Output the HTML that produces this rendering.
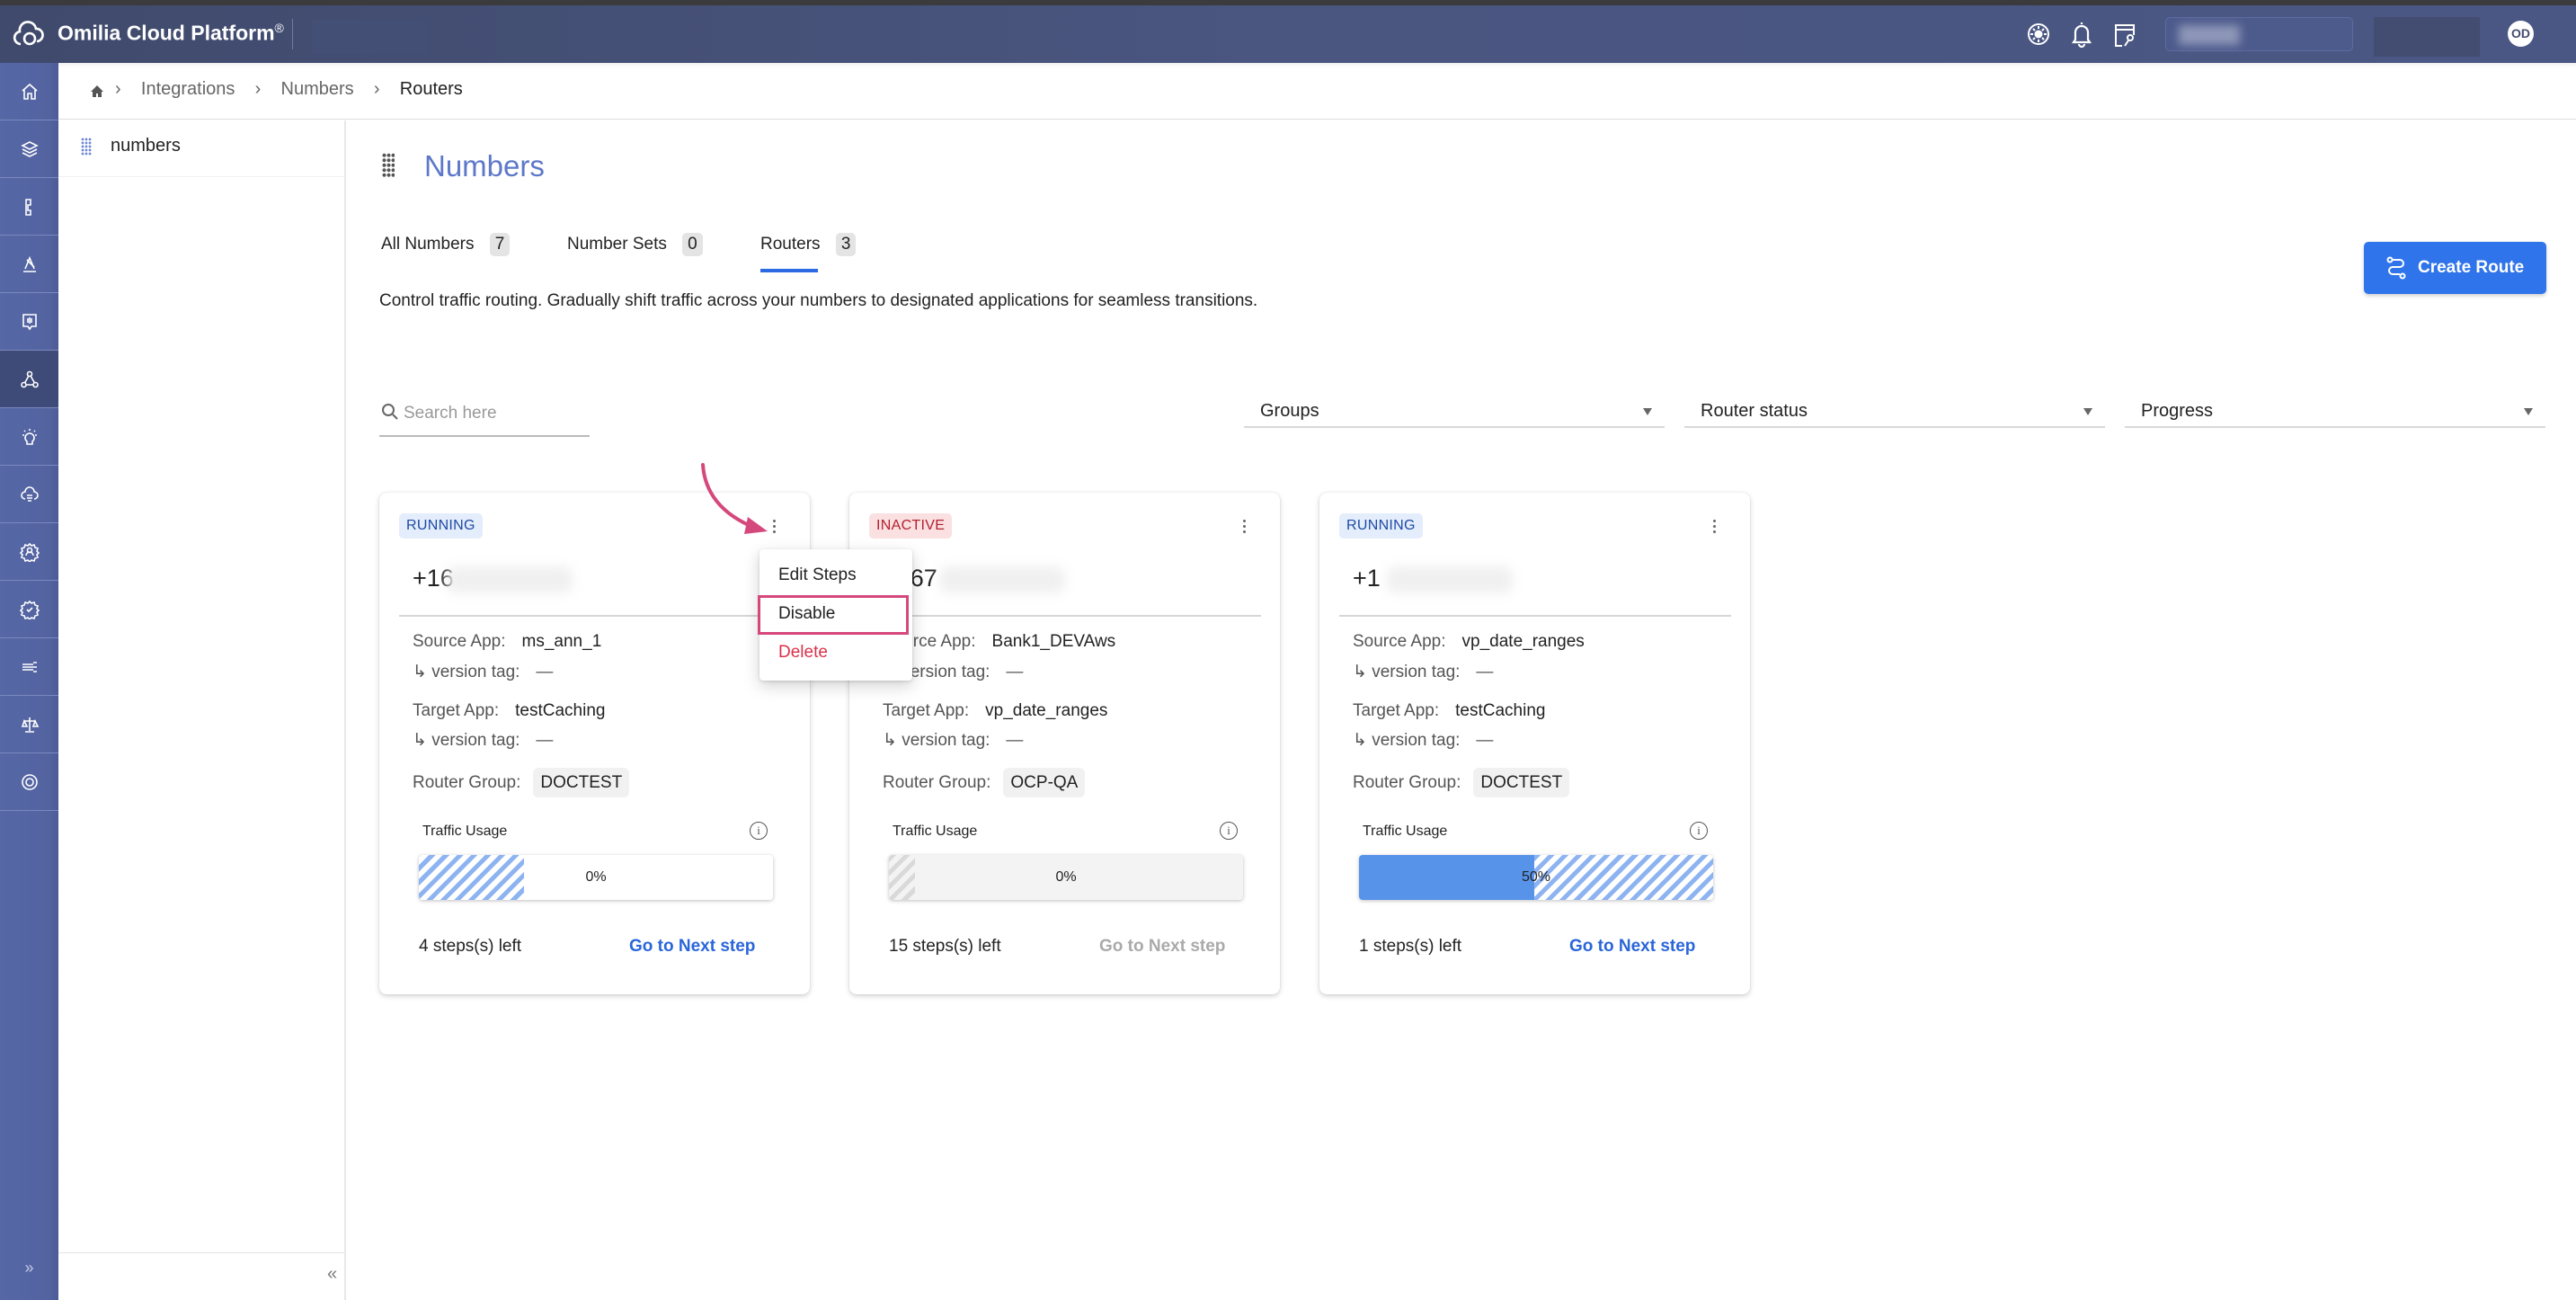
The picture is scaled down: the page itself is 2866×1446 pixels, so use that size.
<!DOCTYPE html>
<html><head><meta charset="utf-8"><style>
*{box-sizing:border-box;margin:0;padding:0}
body{width:2866px;height:1446px;position:relative;overflow:hidden;background:#fff;font-family:"Liberation Sans",sans-serif;color:#222}
.a{position:absolute}
.top{left:0;top:0;width:2866px;height:6px;background:#3b3b3d}
.hdr{left:0;top:6px;width:2866px;height:64px;background:linear-gradient(90deg,#404a6c,#4a5680 50%,#4a5784)}
.side{left:0;top:70px;width:65px;height:1376px;background:linear-gradient(90deg,#5667a6,#5363a0 85%,#4c5b95)}
.si{left:0;width:65px;height:64px;border-bottom:1px solid #7a88bd;display:flex;align-items:center;justify-content:center}
.si svg{width:22px;height:22px;stroke:#fff;fill:none;stroke-width:1.6}
.lbl{color:#555}
.card{width:479px;height:558px;background:#fff;border-radius:8px;box-shadow:0 2px 6px rgba(0,0,0,.18),0 0 1px rgba(0,0,0,.2)}
.card .a{white-space:nowrap}
.badge{left:22px;top:23px;height:28px;padding:0 8px;border-radius:5px;font-size:16px;line-height:28px;letter-spacing:.3px}
.run{background:#e4edfb;color:#1d4aa5}
.ina{background:#fbe0e2;color:#b3202e}
.keb{left:437px;top:30px;width:4px;height:15px;display:flex;flex-direction:column;justify-content:space-between;align-items:center}
.keb i{width:3px;height:3px;background:#666;border-radius:50%}
.ph{left:37px;top:80px;font-size:27px;color:#222}
.blur{top:82px;height:30px;width:140px;background:#f0f0f0;filter:blur(6px);border-radius:10px}
.div{left:22px;top:136px;width:436px;height:2px;background:#d6d6d6}
.row{left:37px;font-size:19px}
.row b{font-weight:normal;color:#222;margin-left:18px}
.chip{background:#f1f1f1;border-radius:6px;padding:6px 8px;color:#222;margin-left:14px}
.tu{left:48px;top:368px;font-size:16px;color:#222}
.info{left:412px;top:366px;width:20px;height:20px;border:1.5px solid #555;border-radius:50%;font-size:13px;text-align:center;line-height:17px;color:#555;font-family:"Liberation Serif",serif}
.bar{left:44px;top:403px;width:394px;height:50px;border-radius:4px;box-shadow:0 1px 4px rgba(0,0,0,.25);overflow:hidden;background:#fff}
.bar span{position:absolute;left:0;top:0;width:100%;text-align:center;line-height:50px;font-size:16px}
.stripe{background:repeating-linear-gradient(-45deg,#fff 0 6px,#8db3f1 6px 11px)}
.gstripe{background:repeating-linear-gradient(-45deg,#f3f3f3 0 6px,#d9d9d9 6px 11px)}
.steps{left:44px;top:494px;font-size:19px}
.nx{left:278px;top:494px;font-size:19px;font-weight:bold;color:#2a66d9}
.dd{height:31px;border-bottom:2px solid #d8d8d8;font-size:20px;color:#222}
.dd::after{content:"";position:absolute;right:14px;top:9px;border-left:5px solid transparent;border-right:5px solid transparent;border-top:8px solid #666}
</style></head><body>
<div class="a top"></div>
<div class="a hdr">
  <svg class="a" style="left:14px;top:17px" width="36" height="30" viewBox="0 0 36 30" fill="none" stroke="#fff" stroke-width="2.6"><path d="M9 26a7 7 0 01-1-13.9A9 9 0 0126 9a7 7 0 011 14"/><circle cx="19" cy="20" r="6"/></svg>
  <div class="a" style="left:64px;top:17px;color:#fff;font-size:23px;font-weight:bold;white-space:nowrap">Omilia Cloud Platform<sup style="font-size:14px;font-weight:normal">®</sup></div>
  <div class="a" style="left:325px;top:15px;width:1px;height:34px;background:#6d7ab0"></div>
  <div class="a" style="left:347px;top:16px;width:128px;height:38px;background:#444f75"></div>
  <svg class="a" style="left:2255px;top:19px" width="26" height="26" viewBox="0 0 26 26" fill="none" stroke="#fff" stroke-width="2"><circle cx="13" cy="13" r="11"/><circle cx="13" cy="13" r="3.5" fill="#fff"/><path d="M13 4v3M13 19v3M4 13h3M19 13h3M7 7l2 2M17 17l2 2M7 19l2-2M17 9l2-2"/></svg>
  <svg class="a" style="left:2303px;top:16px" width="26" height="32" viewBox="0 0 26 32" fill="none" stroke="#fff" stroke-width="2.2"><path d="M13 3v2M6 22V14a7 7 0 0114 0v8l2 3H4z"/><path d="M10 27a3 3 0 006 0"/></svg>
  <svg class="a" style="left:2352px;top:20px" width="26" height="28" viewBox="0 0 26 28" fill="none" stroke="#fff" stroke-width="2"><path d="M9 25H2V2h20v11M2 7h20"/><circle cx="18" cy="16" r="3"/><path d="M16 19l-4 6"/></svg>
  <div class="a" style="left:2409px;top:13px;width:209px;height:38px;background:#4d5a8c;border:1px solid #5d6ba2;border-radius:5px"></div>
  <div class="a" style="left:2424px;top:22px;width:68px;height:22px;background:#8e97b8;filter:blur(5px)"></div>
  <div class="a" style="left:2641px;top:13px;width:118px;height:44px;background:#434d72"></div>
  <div class="a" style="left:2790px;top:17px;width:29px;height:29px;background:#fff;border-radius:50%;color:#444c6e;font-size:14px;font-weight:bold;text-align:center;line-height:29px">OD</div>
</div>
<div class="a side">
  <div class="a si" style="top:0"><svg viewBox="0 0 22 22"><path d="M3 10L11 3l8 7M5 9v10h4v-6h4v6h4V9"/></svg></div>
  <div class="a si" style="top:64px"><svg viewBox="0 0 22 22"><path d="M11 3l8 4-8 4-8-4zM3 11l8 4 8-4M3 15l8 4 8-4"/></svg></div>
  <div class="a si" style="top:128px"><svg viewBox="0 0 22 22"><path d="M7 3h5v6H9v6h3v5H7z"/></svg></div>
  <div class="a si" style="top:192px"><svg viewBox="0 0 22 22"><path d="M4 19h14M6 16l5-12 5 12M8 6l8 8"/></svg></div>
  <div class="a si" style="top:256px"><svg viewBox="0 0 22 22"><path d="M4 3h14v13h-5l-2 3-2-3H4zM9 7v5M11 6v7M13 7v5"/></svg></div>
  <div class="a si" style="top:320px;background:#3e4a78"><svg viewBox="0 0 22 22"><circle cx="11" cy="5" r="2.5"/><circle cx="4.5" cy="17" r="2.5"/><circle cx="17.5" cy="17" r="2.5"/><path d="M10 7l-4.5 8M12 7l4.5 8M7 17h8"/></svg></div>
  <div class="a si" style="top:384px"><svg viewBox="0 0 22 22"><path d="M8 16a5 5 0 116 0v3H8zM11 2v2M3 9h2M17 9h2M5 4l1 1M17 4l-1 1"/></svg></div>
  <div class="a si" style="top:448px"><svg viewBox="0 0 22 22"><path d="M6 16a4 4 0 010-8 5 5 0 0110 0 4 4 0 010 8M8 12h6M8 15h6M9 18h4"/></svg></div>
  <div class="a si" style="top:512px"><svg viewBox="0 0 22 22"><path d="M11 2l2 2 3-1 1 3 3 1-1 3 2 2-2 2 1 3-3 1-1 3-3-1-2 2-2-2-3 1-1-3-3-1 1-3-2-2 2-2-1-3 3-1 1-3 3 1z"/><circle cx="11" cy="9" r="2.5"/><path d="M7 15a4 4 0 018 0"/></svg></div>
  <div class="a si" style="top:576px"><svg viewBox="0 0 22 22"><path d="M11 2l2 2 3-1 1 3 3 1-1 3 2 2-2 2 1 3-3 1-1 3-3-1-2 2-2-2-3 1-1-3-3-1 1-3-2-2 2-2-1-3 3-1 1-3 3 1z"/><path d="M8 11l2 2 4-4"/></svg></div>
  <div class="a si" style="top:640px"><svg viewBox="0 0 22 22"><path d="M3 8h12M3 11h16M3 14h12M15 6h4M15 16h4"/></svg></div>
  <div class="a si" style="top:704px"><svg viewBox="0 0 22 22"><path d="M11 3v15M6 19h10M4 7h14M5 7l-2 6h5zM17 7l-2 6h5z"/></svg></div>
  <div class="a si" style="top:768px"><svg viewBox="0 0 22 22"><circle cx="11" cy="11" r="8"/><circle cx="11" cy="11" r="4"/></svg></div>
  <div class="a" style="left:0;top:1330px;width:65px;text-align:center;color:#c5cbe6;font-size:18px">»</div>
</div>
<div class="a" style="left:65px;top:70px;width:2801px;height:63px;border-bottom:1px solid #dcdcdc;box-shadow:inset 0 8px 8px -8px rgba(0,0,0,.12)"></div>
<svg class="a" style="left:100px;top:94px" width="16" height="16" viewBox="0 0 16 16" fill="#555"><path d="M8 1L1 8h2v6h4v-4h2v4h4V8h2z"/></svg>
<div class="a" style="left:128px;top:88px;font-size:20px;color:#666;white-space:nowrap">›&nbsp;&nbsp;&nbsp;&nbsp;Integrations&nbsp;&nbsp;&nbsp;&nbsp;›&nbsp;&nbsp;&nbsp;&nbsp;Numbers&nbsp;&nbsp;&nbsp;&nbsp;›&nbsp;&nbsp;&nbsp;&nbsp;<span style="color:#222">Routers</span></div>
<div class="a" style="left:65px;top:134px;width:320px;height:1312px;border-right:2px solid #e8e8e8"></div>
<div class="a" style="left:65px;top:196px;width:318px;height:1px;background:#eef0f6"></div>
<div class="a" style="left:90px;top:153px;width:12px;height:20px;background:radial-gradient(circle,#6d86d6 1.2px,transparent 1.6px) 0 0/4px 4px"></div>
<div class="a" style="left:123px;top:151px;font-size:20px">numbers</div>
<div class="a" style="left:65px;top:1393px;width:318px;height:1px;background:#e4e4e4"></div>
<div class="a" style="left:364px;top:1406px;font-size:20px;color:#777">«</div>
<div class="a" style="left:425px;top:170px;width:14px;height:28px;background:radial-gradient(circle,#555 1.8px,transparent 2.2px) 0 0/5px 5.5px"></div>
<div class="a" style="left:472px;top:166px;font-size:33px;color:#5d78c9">Numbers</div>
<div class="a" style="left:424px;top:259px;font-size:19px;white-space:nowrap">All Numbers <span style="display:inline-block;background:#e4e4e4;border-radius:5px;padding:2px 6px;margin-left:12px">7</span></div>
<div class="a" style="left:631px;top:259px;font-size:19px;white-space:nowrap">Number Sets <span style="display:inline-block;background:#e4e4e4;border-radius:5px;padding:2px 6px;margin-left:12px">0</span></div>
<div class="a" style="left:846px;top:259px;font-size:19px;white-space:nowrap">Routers <span style="display:inline-block;background:#e4e4e4;border-radius:5px;padding:2px 6px;margin-left:12px">3</span></div>
<div class="a" style="left:846px;top:299px;width:64px;height:4px;background:#2c6ae4"></div>
<div class="a" style="left:422px;top:324px;font-size:19px;white-space:nowrap">Control traffic routing. Gradually shift traffic across your numbers to designated applications for seamless transitions.</div>
<div class="a" style="left:2630px;top:269px;width:203px;height:58px;background:#2f74ea;border-radius:5px;color:#fff;font-size:19px;font-weight:bold;line-height:58px;padding-left:60px;box-shadow:0 2px 4px rgba(0,0,0,.2)">Create Route</div>
<svg class="a" style="left:2655px;top:285px" width="22" height="26" viewBox="0 0 22 26" fill="none" stroke="#fff" stroke-width="2"><circle cx="4" cy="4" r="2.5"/><circle cx="18" cy="22" r="2.5"/><path d="M7 4h8a4 4 0 010 8H7a4 4 0 000 8h8"/></svg>
<svg class="a" style="left:424px;top:448px" width="20" height="20" viewBox="0 0 20 20" fill="none" stroke="#666" stroke-width="2"><circle cx="8" cy="8" r="6"/><path d="M13 13l5 5"/></svg>
<div class="a" style="left:449px;top:449px;font-size:19px;color:#999">Search here</div>
<div class="a" style="left:422px;top:484px;width:234px;height:2px;background:#bbb"></div>
<div class="a dd" style="left:1384px;top:445px;width:468px;padding-left:18px;line-height:24px">Groups</div>
<div class="a dd" style="left:1874px;top:445px;width:468px;padding-left:18px;line-height:24px">Router status</div>
<div class="a dd" style="left:2364px;top:445px;width:468px;padding-left:18px;line-height:24px">Progress</div>

<div class="a card" style="left:422px;top:548px">
  <div class="a badge run">RUNNING</div>
  <div class="a keb"><i></i><i></i><i></i></div>
  <div class="a ph">+16</div><div class="a blur" style="left:75px"></div>
  <div class="a div"></div>
  <div class="a row lbl" style="top:155px">Source App:<b>ms_ann_1</b></div>
  <div class="a row lbl" style="top:188px">↳ version tag:<b style="color:#555">—</b></div>
  <div class="a row lbl" style="top:232px">Target App:<b>testCaching</b></div>
  <div class="a row lbl" style="top:264px">↳ version tag:<b style="color:#555">—</b></div>
  <div class="a row lbl" style="top:312px">Router Group:<span class="chip">DOCTEST</span></div>
  <div class="a tu">Traffic Usage</div><div class="a info">i</div>
  <div class="a bar"><div class="a stripe" style="left:0;top:0;width:117px;height:50px"></div><span>0%</span></div>
  <div class="a steps">4 steps(s) left</div><div class="a nx">Go to Next step</div>
</div>
<div class="a card" style="left:945px;top:548px">
  <div class="a badge ina">INACTIVE</div>
  <div class="a keb"><i></i><i></i><i></i></div>
  <div class="a ph">+267</div><div class="a blur" style="left:100px"></div>
  <div class="a div"></div>
  <div class="a row lbl" style="top:155px">Source App:<b>Bank1_DEVAws</b></div>
  <div class="a row lbl" style="top:188px">↳ version tag:<b style="color:#555">—</b></div>
  <div class="a row lbl" style="top:232px">Target App:<b>vp_date_ranges</b></div>
  <div class="a row lbl" style="top:264px">↳ version tag:<b style="color:#555">—</b></div>
  <div class="a row lbl" style="top:312px">Router Group:<span class="chip">OCP-QA</span></div>
  <div class="a tu">Traffic Usage</div><div class="a info">i</div>
  <div class="a bar" style="background:#f3f3f3"><div class="a gstripe" style="left:0;top:0;width:29px;height:50px"></div><span>0%</span></div>
  <div class="a steps">15 steps(s) left</div><div class="a nx" style="color:#aaa">Go to Next step</div>
</div>
<div class="a card" style="left:1468px;top:548px">
  <div class="a badge run">RUNNING</div>
  <div class="a keb"><i></i><i></i><i></i></div>
  <div class="a ph">+1</div><div class="a blur" style="left:75px"></div>
  <div class="a div"></div>
  <div class="a row lbl" style="top:155px">Source App:<b>vp_date_ranges</b></div>
  <div class="a row lbl" style="top:188px">↳ version tag:<b style="color:#555">—</b></div>
  <div class="a row lbl" style="top:232px">Target App:<b>testCaching</b></div>
  <div class="a row lbl" style="top:264px">↳ version tag:<b style="color:#555">—</b></div>
  <div class="a row lbl" style="top:312px">Router Group:<span class="chip">DOCTEST</span></div>
  <div class="a tu">Traffic Usage</div><div class="a info">i</div>
  <div class="a bar"><div class="a" style="left:0;top:0;width:195px;height:50px;background:#5893ea"></div><div class="a stripe" style="left:195px;top:0;width:199px;height:50px"></div><span>50%</span></div>
  <div class="a steps">1 steps(s) left</div><div class="a nx">Go to Next step</div>
</div>
<div class="a" style="left:845px;top:611px;width:170px;height:146px;background:#fff;border-radius:4px;box-shadow:0 6px 18px rgba(0,0,0,.18),0 1px 3px rgba(0,0,0,.15)"></div>
<div class="a" style="left:866px;top:629px;font-size:19px">Edit Steps</div>
<div class="a" style="left:843px;top:662px;width:168px;height:44px;border:3px solid #d5487c"></div>
<div class="a" style="left:866px;top:672px;font-size:19px">Disable</div>
<div class="a" style="left:866px;top:715px;font-size:19px;color:#d9324a">Delete</div>
<svg class="a" style="left:770px;top:505px" width="100" height="100" viewBox="0 0 100 100" fill="none"><path d="M12 12c2 30 20 55 58 70" stroke="#d5487c" stroke-width="4" stroke-linecap="round"/><path d="M62 70l22 16-26 3z" fill="#d5487c"/></svg>
</body></html>
